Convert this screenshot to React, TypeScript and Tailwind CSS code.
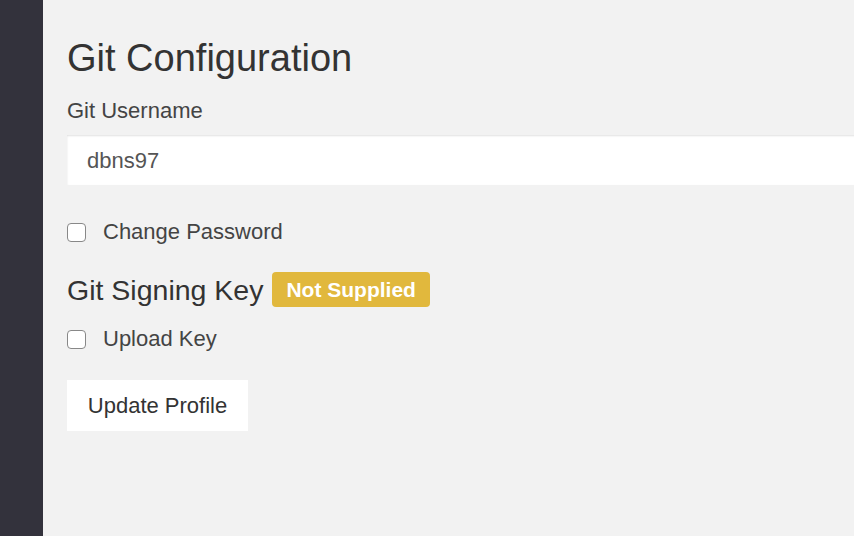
export default function App() {
  const font = { fontFamily: '"Liberation Sans", Arial, Helvetica, sans-serif' };
  return (
    <div className="flex h-[536px] w-[854px] overflow-hidden bg-[#f2f2f2]" style={font}>
      <div className="w-[43px] shrink-0 bg-[#33323c]" />
      <div className="flex min-w-0 flex-1 flex-col pl-[24px] pt-[36px] text-[#333]">
        <h1 className="text-[38px] leading-[44px] text-[#333]">Git Configuration</h1>
        <div className="mt-[19px] text-[22px] leading-[24px] text-[#444]">Git Username</div>
        <div className="mt-[12px] flex h-[50px] w-[820px] items-center bg-white pl-[20px] text-[22px] text-[#555] shadow-[inset_0_1px_2px_rgba(0,0,0,0.12)]">
          dbns97
        </div>
        <label className="mt-[35px] flex items-center text-[22px] leading-[24px] text-[#444]">
          <span className="h-[19px] w-[19px] rounded-[4px] border-[1.5px] border-[#888] bg-white" />
          <span className="ml-[17px]">Change Password</span>
        </label>
        <div className="mt-[28px] flex items-center">
          <span className="text-[28.5px] leading-[34px] text-[#333]">Git Signing Key</span>
          <span className="ml-[9px] flex h-[35px] items-center rounded-[4px] bg-[#e1b83d] px-[14px] text-[21px] font-bold text-white">
            Not Supplied
          </span>
        </div>
        <label className="mt-[20px] flex items-center text-[22px] leading-[24px] text-[#444]">
          <span className="h-[19px] w-[19px] rounded-[4px] border-[1.5px] border-[#888] bg-white" />
          <span className="ml-[17px]">Upload Key</span>
        </label>
        <div className="mt-[29px]">
          <button className="flex h-[51px] w-[181px] items-center justify-center bg-white text-[22px] text-[#333]">
            Update Profile
          </button>
        </div>
      </div>
    </div>
  );
}
